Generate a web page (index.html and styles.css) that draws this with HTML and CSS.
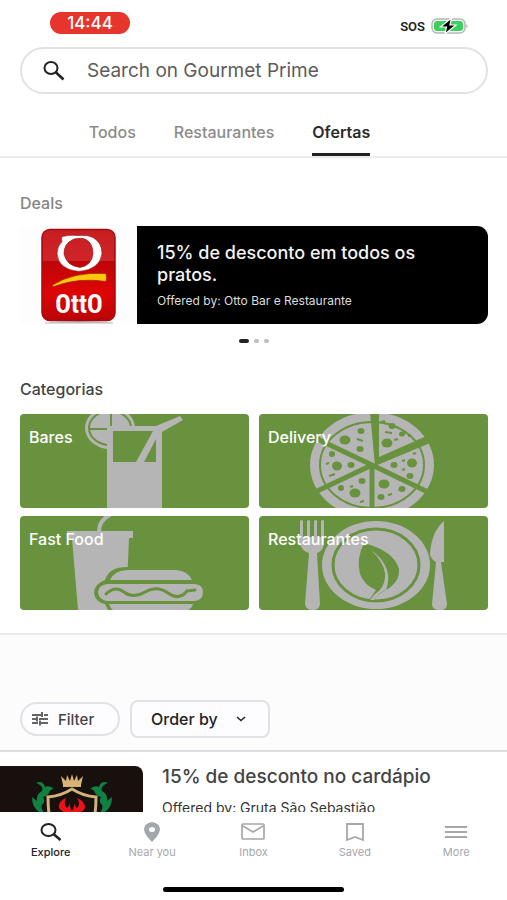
FILE: index.html
```html
<!DOCTYPE html>
<html lang="pt-BR">
<head>
<meta charset="utf-8">
<meta name="viewport" content="width=device-width, initial-scale=1">
<title>Gourmet Prime</title>
<link rel="stylesheet" href="styles.css">
</head>
<body>
<div class="status">
  <span class="clock">14:44</span>
  <span class="signal">SOS
    <svg class="battery" width="38" height="16" viewBox="0 0 38 16" aria-hidden="true">
      <rect x="1" y="1" width="33" height="14" rx="5" fill="#fff" stroke="#b5b8b5" stroke-width="1.5"/>
      <rect x="3" y="3" width="29" height="10" rx="3" fill="#3bd15f"/>
      <path d="M35.500 6q2 2 0 4z" fill="#999"/>
      <path d="M20.500 0 9.500 9h6l-1.500 7 11-9h-6z" fill="#000" stroke="#fff" stroke-width="1.200"/>
    </svg>
  </span>
</div>
<header class="header">
  <label class="search">
    <svg width="24" height="22" viewBox="0 0 24 22" aria-hidden="true"><ellipse cx="8" cy="8" rx="6.500" ry="6" fill="none" stroke="#222" stroke-width="2"/><path d="m12.500 12 8 7.500" stroke="#222" stroke-width="2.600"/></svg>
    <input type="search" placeholder="Search on Gourmet Prime" aria-label="Search on Gourmet Prime">
  </label>
  <nav class="tabs" aria-label="Seções">
    <a href="#todos">Todos</a>
    <a href="#restaurantes">Restaurantes</a>
    <a href="#ofertas" class="current" aria-current="page">Ofertas</a>
  </nav>
</header>
<main class="content">
  <section class="deals">
    <h2 class="heading muted">Deals</h2>
    <a class="deal" href="#deal">
      <svg class="deal-logo" viewBox="0 0 117 97" role="img" aria-label="Otto">
        <defs>
          <linearGradient id="red" x1="0" y1="0" x2="0" y2="1"><stop offset="0" stop-color="#c81e22"/><stop offset=".34" stop-color="#cf2529"/><stop offset=".35" stop-color="#bd0508"/><stop offset=".7" stop-color="#df0404"/><stop offset="1" stop-color="#b90508"/></linearGradient>
        </defs>
        <rect width="117" height="97" fill="#fdfdfd"/>
        <path d="M25 96q34-3 68 0v1H25z" fill="#bbb"/>
        <rect x="22" y="3" width="73" height="91" rx="8" fill="url(#red)" stroke="#a30b0e" stroke-width="1.500"/>
        <path fill-rule="evenodd" d="M42 10q8-2 17-1 8-1 14 2 9 5 9 16-2 16-23 18-21-2-22-18 0-7 5-12-1-2 0-5zM53 13q-9 4-9 14 2 12 16 14 12-2 13-14 0-10-7-14-4-2-8-1-3 0-5 1z" fill="#fff" stroke="#8d0b0b" stroke-width=".6"/>
        <path d="M32 59q21-14 54-12 1 4 0 8-27-4-49 4-5 2-5 0z" fill="#fdc80c" stroke="#9a2108" stroke-width=".7"/>
        <text x="59" y="86" class="otto">OttO</text>
      </svg>
      <div class="deal-text">
        <strong>15% de desconto em todos os pratos.</strong>
        <small>Offered by: Otto Bar e Restaurante</small>
      </div>
    </a>
    <div class="dots"><i class="on"></i><i></i><i></i></div>
  </section>

  <section class="categories">
    <h2 class="heading">Categorias</h2>
    <div class="grid">
      <a class="tile" href="#bares">
        <svg viewBox="0 0 229 94" preserveAspectRatio="xMidYMid slice" aria-hidden="true">
          <ellipse class="ink" cx="90" cy="14" rx="25" ry="21"/>
          <g class="cut-line" stroke-width="2"><ellipse cx="90" cy="14" rx="21" ry="17"/><path d="M91-3v16M69 15h21"/></g>
          <path class="ink" d="M87 12h49l24-10 3 4-21 12v76H87z"/>
          <path class="cut" d="M93 17h40l-17 31H93zM136 25v23h-12z"/>
        </svg>
        <span>Bares</span>
      </a>
      <a class="tile" href="#delivery">
        <svg viewBox="0 0 229 94" preserveAspectRatio="xMidYMid slice" aria-hidden="true">
          <ellipse class="ink" cx="113" cy="51" rx="62" ry="53"/>
          <ellipse class="cut-line" cx="113" cy="51" rx="52" ry="43" stroke-width="2"/>
          <path class="cut" d="M111-2h9v45l52-23 4 7-60 25z"/>
          <path class="cut-line" stroke-width="5" d="M113 51v45M113 51 52 22M113 51 54 79M113 51l58 28"/>
          <g class="cut">
            <ellipse cx="86" cy="26" rx="5.500" ry="4.500"/><ellipse cx="102" cy="17" rx="3.500" ry="3"/><ellipse cx="101" cy="35" rx="3.500" ry="3"/><ellipse cx="133" cy="12" rx="3.500" ry="3"/><ellipse cx="128" cy="29" rx="5.500" ry="4.500"/><ellipse cx="143" cy="20" rx="3" ry="2.500"/>
            <ellipse cx="73" cy="40" rx="3" ry="3"/><ellipse cx="78" cy="52" rx="5" ry="4.500"/><ellipse cx="92" cy="51" rx="3.500" ry="3"/><ellipse cx="82" cy="74" rx="3" ry="3"/><ellipse cx="96" cy="79" rx="5.500" ry="4.500"/><ellipse cx="103" cy="67" rx="3.500" ry="3"/>
            <ellipse cx="135" cy="51" rx="3.500" ry="3"/><ellipse cx="153" cy="49" rx="5" ry="4.500"/><ellipse cx="151" cy="62" rx="3.500" ry="3"/><ellipse cx="125" cy="70" rx="5.500" ry="4.500"/><ellipse cx="122" cy="83" rx="3.500" ry="3"/><ellipse cx="143" cy="75" rx="3.500" ry="3"/>
          </g>
          <path class="cut-line" stroke-width="2" d="m98 25 6 2M126 18l7 1M135 26l4-1M70 62l6-2M67 50l3-1M91 73l3-1M101 88l4-1M143 47l3-1M143 56l3-1M154 40l3-1M129 81l4-1M122 8l4-1M149 22l3-1"/>
        </svg>
        <span>Delivery</span>
      </a>
      <a class="tile" href="#fastfood">
        <svg viewBox="0 0 229 94" preserveAspectRatio="xMidYMid slice" aria-hidden="true">
          <path class="ink" d="M47 15h66v7h-4l-3 72H58l-6-72h-5z"/>
          <path class="ink-line" stroke-width="4" d="M79 16q0-12 11-17"/>
          <path class="cut" d="M85 64q4-13 22-13h60q12 3 16 15 8 4 8 12l-8 20H90l-5-10q-10-2-11-11 0-9 11-13z"/>
          <path class="ink" d="M90 64q5-10 17-10h49q12 1 16 10zM87 68h88q8 1 8 8 0 8-8 9H87q-8-1-9-9 1-7 9-8zM89 88h84q-1 4-5 6H93q-2-1-4-6z"/>
          <path class="cut-line" stroke-width="3" stroke-linecap="round" d="M86 78q9-9 18-2t21 0 23 1 19-2l8-1"/>
        </svg>
        <span>Fast Food</span>
      </a>
      <a class="tile" href="#rest">
        <svg viewBox="0 0 229 94" preserveAspectRatio="xMidYMid slice" aria-hidden="true">
          <path class="ink" d="M41 5q2-2 3 0v16h4V5q2-2 3 0v16h4V5q2-2 3 0v16h4V5q2-2 3 0v23q-1 7-7 9l3 51q-1 6-7 6-7 0-8-6l4-51q-7-2-9-9z"/>
          <ellipse class="ink" cx="117" cy="49" rx="54" ry="44"/>
          <ellipse class="cut-line" cx="117" cy="49" rx="43" ry="36" stroke-width="3"/>
          <path class="cut" d="M105 27Q97 43 101 58q4 11 16 16l-7 10 4 1q6-8 13-11 14-8 13-21-5-18-35-26z"/>
          <path class="ink" d="M112 34q12 8 16 20 3 9-1 20-4 1-7 4l-5 6h-4q4-6 10-10 6-8 5-17-2-12-14-23z"/>
          <path class="ink" d="M185 5v41h-3l6 42q0 6-7 6-8 0-8-6l4-42q-4-2-6-7 1-23 14-34z"/>
        </svg>
        <span>Restaurantes</span>
      </a>
    </div>
  </section>

  <section class="filters">
    <button class="filter" type="button">
      <svg width="16" height="14" viewBox="0 0 16 14" aria-hidden="true"><path d="M0 3h9M12 3h4M10 0v5M0 7h4M7 7h9M5 4.500v5M0 11h6M9 11h7M8 8.500v5" fill="none" stroke="#333" stroke-width="1.500"/></svg>
      Filter
    </button>
    <label class="order">
      <select aria-label="Order by"><option>Order by</option></select>
      <svg width="10" height="6" viewBox="0 0 10 6" aria-hidden="true"><path d="m1 1 4 3.500L9 1" fill="none" stroke="#222" stroke-width="1.500"/></svg>
    </label>
  </section>

  <article class="offer">
    <svg class="offer-img" viewBox="0 0 143 97" role="img" aria-label="Gruta São Sebastião">
      <rect width="143" height="97" fill="#17100d"/>
      <path d="m61 10 5 5 1-6 3 6 2-7 2 7 3-6 1 6 5-5-2 9v2H63v-2z" fill="#d8b474"/>
      <path d="M36 17q7-3 9 4 5-2 9 2-4 0-5 4-2 3-6 4 3 4-1 8-2 3 4 11l-7-4q-7-5-7-15l5 4q-1-7 5-10 2-5-6-8z" fill="#0f8243"/>
      <path transform="translate(144 0) scale(-1 1)" d="M36 17q7-3 9 4 5-2 9 2-4 0-5 4-2 3-6 4 3 4-1 8-2 3 4 11l-7-4q-7-5-7-15l5 4q-1-7 5-10 2-5-6-8z" fill="#0f8243"/>
      <path d="M72 23q-11 7-24 8 0 44 24 58 24-14 24-58-13-1-24-8z" fill="#17100d" stroke="#d2b27b" stroke-width="3"/>
      <path d="M66 32q-8 3-7 10 3 5 9 5v10h8V47q7 0 9-5 0-7-8-10 4 6 0 10-3-2-2-6l-2 8h-2l-2-8q1 4-2 6-4-4-1-10z" fill="#ec1017"/>
    </svg>
    <div class="offer-text">
      <h3>15% de desconto no cardápio</h3>
      <p>Offered by: Gruta São Sebastião</p>
    </div>
  </article>
</main>
<footer class="bottom">
  <nav class="bar" aria-label="Principal">
    <a href="#explore" class="current"><svg width="24" height="20" viewBox="0 0 24 20" aria-hidden="true"><ellipse cx="9.500" cy="8" rx="7" ry="6" fill="none" stroke="currentColor" stroke-width="2"/><path d="m14.500 12 7 6" stroke="currentColor" stroke-width="2.500"/></svg>Explore</a>
    <a href="#near"><svg width="24" height="20" viewBox="0 0 24 20" aria-hidden="true"><path fill-rule="evenodd" d="M12 0q8 1 8 8-1 5-8 12-7-7-8-12 0-7 8-8zm0 5a3 2.500 0 1 0 0 5 3 2.500 0 1 0 0-5z" fill="currentColor"/></svg>Near you</a>
    <a href="#inbox"><svg width="24" height="20" viewBox="0 0 24 20" aria-hidden="true"><path d="M2 2h20q1 0 1 1v13q0 1-1 1H2q-1 0-1-1V3q0-1 1-1zm0 2 10 6 10-6" fill="none" stroke="currentColor" stroke-width="1.700"/></svg>Inbox</a>
    <a href="#saved"><svg width="24" height="20" viewBox="0 0 24 20" aria-hidden="true"><path d="M4 2h16v16l-8-3-8 3z" fill="none" stroke="currentColor" stroke-width="1.800"/></svg>Saved</a>
    <a href="#more"><svg width="24" height="20" viewBox="0 0 24 20" aria-hidden="true"><path d="M1 5h22M1 10h22M1 15h22" stroke="currentColor" stroke-width="2"/></svg>More</a>
  </nav>
  <div class="home"></div>
</footer>
</body>
</html>
```
FILE: styles.css
```css
* { box-sizing: border-box; }
body {
  margin: 0;
  height: 100vh;
  display: flex;
  flex-direction: column;
  background: #fff;
  color: #333;
  font-family: Inter, "Liberation Sans", sans-serif;
}
a { color: inherit; text-decoration: none; }
svg { display: block; flex: none; }
h2, h3, p { margin: 0; }
.status {
  display: flex;
  justify-content: space-between;
  padding: 12px 38px 0 50px;
  height: 47px;
  flex: none;
}
.clock {
  width: 80px;
  height: 22px;
  border-radius: 11px;
  background: #e6352d;
  color: #fff;
  font-size: 17px;
  font-weight: 500;
  line-height: 22px;
  text-align: center;
}
.signal {
  display: flex;
  align-items: center;
  gap: 6px;
  height: 28px;
  font-family: Roboto, sans-serif;
  font-size: 13px;
  font-weight: 600;
  color: #222;
}
.header { flex: none; border-bottom: 2px solid #ececec; }
.search {
  display: flex;
  align-items: center;
  gap: 20px;
  height: 47px;
  margin: 0 19px 0 20px;
  padding: 0 21px;
  border: 2px solid #e2e2e2;
  border-radius: 24px;
}
.search input {
  flex: 1;
  min-width: 0;
  padding: 0;
  border: 0;
  outline: 0;
  background: none;
  font: 400 19px Inter, sans-serif;
  color: #333;
}
.search input::placeholder { color: #5c5c5c; opacity: 1; }
.tabs {
  display: flex;
  justify-content: center;
  gap: 38px;
  padding-right: 48px;
  margin-top: 22px;
  font-size: 16px;
  font-weight: 500;
  color: #8b8b8b;
}
.tabs a { height: 40px; line-height: 32px; }
.tabs .current { color: #2b2b2b; font-weight: 600; border-bottom: 3px solid #222; border-radius: 2px 2px 0 0; }
.content { flex: 1; min-height: 0; overflow: hidden; }
.deals, .categories { padding: 0 19px 0 20px; }
.heading { font-size: 16px; line-height: 20px; font-weight: 500; color: #444; }
.muted { color: #858585; }
.deals { padding-top: 35px; }
.deal { display: flex; margin-top: 13px; min-height: 98px; }
.deal-logo { width: 117px; height: 98px; }
.otto { font: 700 26px "Liberation Sans Narrow", "Roboto Condensed", "Open Sans Condensed", Roboto, sans-serif; fill: #fff; text-anchor: middle; }
.deal-text {
  flex: 1;
  display: flex;
  flex-direction: column;
  gap: 8px;
  padding: 16px 40px 12px 20px;
  border-radius: 0 11px 11px 0;
  background: #000;
  color: #f3f3f3;
}
.deal-text strong { font-size: 18px; line-height: 22px; font-weight: 500; }
.deal-text small { font-size: 12px; line-height: 14px; color: #ddd; }
.dots { display: flex; justify-content: center; gap: 5px; margin-top: 15px; }
.dots i { width: 5px; height: 4px; border-radius: 2px; background: #bdbdbd; }
.dots .on { width: 10px; background: #222; }
.categories { padding-top: 36px; padding-bottom: 23px; border-bottom: 2px solid #ececec; }
.grid { display: grid; grid-template-columns: 1fr 1fr; gap: 8px 10px; margin-top: 15px; }
.tile {
  display: grid;
  height: 94px;
  overflow: hidden;
  border-radius: 4px;
  background: #68923e;
}
.tile svg { grid-area: 1 / 1; width: 100%; height: 94px; }
.tile span {
  grid-area: 1 / 1;
  z-index: 1;
  padding: 13px 9px;
  font-size: 16px;
  line-height: 20px;
  font-weight: 500;
  color: #fff;
}
.ink { fill: #b5b5b5; }
.ink-line { fill: none; stroke: #b5b5b5; }
.cut { fill: #68923e; }
.cut-line { fill: none; stroke: #68923e; }
.filters {
  display: flex;
  align-items: center;
  gap: 10px;
  padding: 65px 20px 12px;
  background: #fcfcfc;
  border-bottom: 2px solid #dedee0;
}
.filter, .order {
  display: flex;
  align-items: center;
  border: 2px solid #e3e1e5;
  background: #fdfcfe;
}
.filter {
  gap: 10px;
  width: 100px;
  height: 34px;
  padding: 0 10px;
  border-radius: 17px;
  font: 500 15px Inter, sans-serif;
  color: #444;
}
.order { width: 140px; height: 38px; padding: 0 22px 0 19px; border-radius: 8px; justify-content: space-between; }
.order select {
  appearance: none;
  border: 0;
  padding: 0;
  background: none;
  font: 500 16px Inter, sans-serif;
  color: #222;
}
.offer { display: flex; gap: 19px; padding-top: 14px; }
.offer-img { width: 143px; height: 97px; border-radius: 0 8px 8px 0; }
.offer-text h3 { font-size: 19px; line-height: 22px; font-weight: 500; color: #444; }
.offer-text p { margin-top: 11px; font-size: 14px; line-height: 18px; color: #333; }
.bottom { flex: none; height: 88px; background: #fff; display: flex; flex-direction: column; justify-content: space-between; padding: 10px 0 8px; }
.bar { display: grid; grid-template-columns: repeat(5, 1fr); }
.bar a {
  display: flex;
  flex-direction: column;
  align-items: center;
  gap: 3px;
  font-size: 11px;
  line-height: 14px;
  color: #a5a7a9;
}
.bar .current { color: #222; font-weight: 500; }
.home { align-self: center; width: 181px; height: 5px; border-radius: 3px; background: #000; }
```
